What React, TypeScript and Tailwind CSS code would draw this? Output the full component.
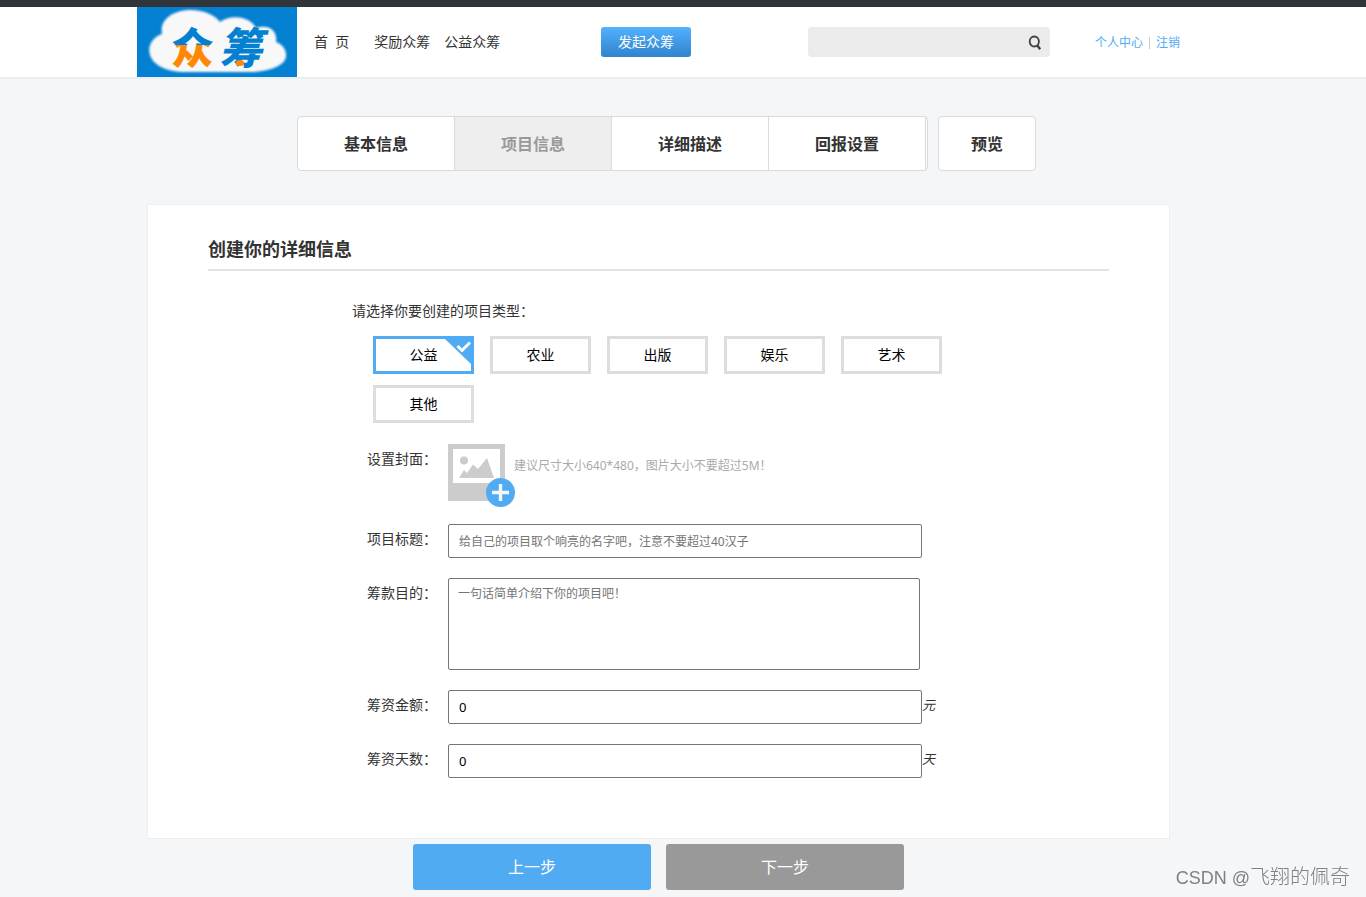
import { useState } from "react";

const categories = ["公益", "农业", "出版", "娱乐", "艺术", "其他"];
const steps = ["基本信息", "项目信息", "详细描述", "回报设置"];

function Logo() {
  return (
    <a href="#" aria-label="众筹" className="block shrink-0">
      <svg width="160" height="70" viewBox="0 0 160 70">
        <defs>
          <linearGradient id="roof" gradientUnits="userSpaceOnUse" x1="0" y1="20" x2="0" y2="60">
            <stop offset="0.46" stopColor="#0380d2" />
            <stop offset="0.46" stopColor="#ff8706" />
          </linearGradient>
          <filter id="soft" x="-5%" y="-5%" width="110%" height="110%">
            <feGaussianBlur stdDeviation="0.8" />
          </filter>
        </defs>
        <rect width="160" height="70" fill="#0380d2" />
        <path
          filter="url(#soft)"
          fill="#f8f8f8"
          d="M25 27C22 12 37 3 54 3C67 3 78 8 83 15C92 8 112 8 119 21C130 17 141 22 139 35C148 38 151 47 148 53C143 61 128 65 112 65H48C29 65 16 58 13 48C10 39 16 30 25 27Z"
        />
        <text x="34" y="57" fontSize="43" fontWeight="900" fill="url(#roof)" fontFamily="'Noto Sans CJK SC', sans-serif">众</text>
        <text x="82" y="57" fontSize="43" fontWeight="900" fontStyle="italic" fill="#0380d2" fontFamily="'Noto Sans CJK SC', sans-serif">筹</text>
        <ellipse cx="103" cy="56" rx="4" ry="3" fill="#ff8706" />
      </svg>
    </a>
  );
}

function Header() {
  return (
    <header className="border-b-2 border-[#ededed] bg-white">
      <div className="h-[7px] bg-[#313539]" />
      <div className="mx-auto flex h-[70px] max-w-[1092px] items-center">
        <Logo />
        <nav className="ml-[17px] flex w-[287px] shrink-0 text-sm">
          <a href="#" className="mr-[25px] whitespace-pre">首  页</a>
          <a href="#" className="mr-3.5">奖励众筹</a>
          <a href="#">公益众筹</a>
        </nav>
        <button className="h-[30px] w-[90px] shrink-0 rounded-[3px] bg-linear-to-b from-[#53b1ff] to-[#2f84cd] text-sm text-white">发起众筹</button>
        <form className="ml-[117px] flex h-[30px] w-[242px] items-center rounded bg-[#ebebeb] pr-2" onSubmit={(e) => e.preventDefault()}>
          <input aria-label="搜索" className="min-w-0 flex-1 bg-transparent px-2 text-sm outline-none" />
          <button aria-label="提交搜索" className="block">
            <svg width="14" height="16" viewBox="0 0 14 16" fill="none" stroke="#404040">
              <ellipse cx="6.3" cy="7.5" rx="4.6" ry="5" strokeWidth="1.8" />
              <path d="M9.3 11.5L12.2 15.2" strokeWidth="2.4" />
            </svg>
          </button>
        </form>
        <div className="ml-[45px] flex shrink-0 items-center pt-0.5 text-xs text-[#50abf2]">
          <a href="#">个人中心</a>
          <span className="mx-1.5 h-3 w-px bg-[#cccccc]" />
          <a href="#">注销</a>
        </div>
      </div>
    </header>
  );
}

function Steps() {
  return (
    <nav className="mt-[37px] ml-[150px] flex gap-2.5 text-base font-bold">
      <div className="flex overflow-hidden rounded border border-[#d9dadb] bg-white pr-px">
        {steps.map((s) => (
          <a
            key={s}
            href="#"
            className={
              "flex h-[53px] w-[157px] items-center justify-center border-r border-[#d9dadb] " +
              (s === "项目信息" ? "bg-[#eeeeee] text-[#999999]" : "")
            }
          >
            {s}
          </a>
        ))}
      </div>
      <a href="#" className="flex w-[98px] items-center justify-center rounded border border-[#d9dadb] bg-white">预览</a>
    </nav>
  );
}

function CoverIcon() {
  return (
    <svg width="68" height="64" viewBox="0 0 68 64" className="block">
      <rect width="57" height="57" fill="#cccccc" />
      <rect x="5" y="5" width="47" height="34" fill="#ffffff" />
      <circle cx="16" cy="16.5" r="4" fill="#cccccc" />
      <path d="M11 34L16 26L19 29L25 20.5L30 25L39 14L46 34Z" fill="#cccccc" />
      <circle cx="52.5" cy="48.5" r="14.5" fill="#50abf2" />
      <path d="M44 48.5H61M52.5 40V57" stroke="#f5f6f8" strokeWidth="3.4" />
    </svg>
  );
}

const label = "w-[81px] shrink-0 pt-[5px] text-sm leading-5";
const field = "rounded-[2px] border border-[#767676] bg-white text-black outline-none placeholder:text-[#757575]";
const unit = "pt-[5px] text-[13px] leading-5";

export default function App() {
  const [selected, setSelected] = useState("公益");
  return (
    <div className="min-h-screen bg-[#f5f6f8] font-['Noto_Sans','Noto_Sans_CJK_SC',sans-serif] text-[#333333]">
      <Header />
      <main className="mx-auto max-w-[1072px] pr-[49px]">
        <Steps />
        <section className="mt-[33px] border border-[#eeeff0] bg-white px-[60px] pt-[30px] pb-[60px]">
          <h1 className="border-b-2 border-[#e2e2e2] pb-1.5 text-lg leading-7 font-bold">创建你的详细信息</h1>
          <form className="ml-36 pt-[30px]">
            <p className="text-sm leading-5">请选择你要创建的项目类型：</p>
            <div className="mt-[15px] ml-[21px] flex max-w-[600px] flex-wrap gap-x-4 gap-y-[11px]">
              {categories.map((c) => (
                <button
                  key={c}
                  type="button"
                  aria-pressed={c === selected}
                  onClick={() => setSelected(c)}
                  className={
                    "relative h-[38px] w-[101px] border-3 text-sm text-black " +
                    (c === selected ? "border-[#50abf2]" : "border-[#dddddd]")
                  }
                >
                  {c}
                  {c === selected && (
                    <svg width="26" height="25" viewBox="0 0 26 25" className="absolute top-0 right-0">
                      <path d="M0 0H26V25Z" fill="#50abf2" />
                      <path d="M12.5 7L17 11.5L25 3.5" fill="none" stroke="#ffffff" strokeWidth="3" />
                    </svg>
                  )}
                </button>
              ))}
            </div>
            <div className="ml-[15px] flex flex-col gap-5">
              <div className="mt-[21px] flex">
                <span className={label}>设置封面：</span>
                <button type="button" aria-label="上传封面" className="-mb-1 block">
                  <CoverIcon />
                </button>
                <span className="-ml-0.5 pt-3 text-xs leading-5 text-[#aaaaaa]">建议尺寸大小640*480，图片大小不要超过5M！</span>
              </div>
              <div className="flex">
                <label htmlFor="title" className={label}>项目标题：</label>
                <input id="title" placeholder="给自己的项目取个响亮的名字吧，注意不要超过40汉子" className={field + " h-[34px] w-[474px] px-2.5 text-xs"} />
              </div>
              <div className="flex">
                <label htmlFor="purpose" className={label}>筹款目的：</label>
                <textarea id="purpose" placeholder="一句话简单介绍下你的项目吧！" className={field + " block h-[92px] w-[472px] resize-none px-[9px] py-[7px] text-xs"} />
              </div>
              <div className="flex">
                <label htmlFor="amount" className={label}>筹资金额：</label>
                <input id="amount" defaultValue="0" className={field + " h-[34px] w-[474px] px-2.5 text-[13px]"} />
                <em className={unit}>元</em>
              </div>
              <div className="flex">
                <label htmlFor="days" className={label}>筹资天数：</label>
                <input id="days" defaultValue="0" className={field + " h-[34px] w-[474px] px-2.5 text-[13px]"} />
                <em className={unit}>天</em>
              </div>
            </div>
          </form>
        </section>
        <div className="mt-[5px] flex justify-center gap-[15px] pb-[7px] text-base text-white">
          <button className="h-[46px] w-[238px] rounded-[3px] bg-[#50abf2]">上一步</button>
          <button className="h-[46px] w-[238px] rounded-[3px] bg-[#999999]">下一步</button>
        </div>
      </main>
      <div className="pointer-events-none fixed right-4 bottom-[5px] font-['Liberation_Sans','Noto_Sans_CJK_SC',sans-serif] text-[20px] leading-7 font-light text-[#7f8183]">
        <span className="text-lg">CSDN @</span>飞翔的佩奇
      </div>
    </div>
  );
}
